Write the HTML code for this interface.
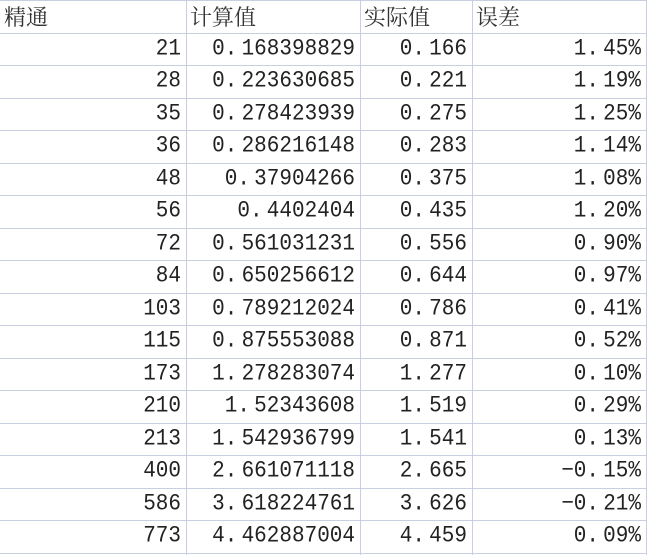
<!DOCTYPE html>
<html><head><meta charset="utf-8"><style>
body{margin:0;width:647px;height:555px;background:#fff;overflow:hidden;position:relative;font-family:"Liberation Mono","Noto Sans CJK SC",monospace;color:#222}
.h{position:absolute;left:0;width:647px;height:1px;background:#c9cfe0}
.v{position:absolute;top:0;width:1px;height:555px;background:#c9cfe0}
.c{position:absolute;height:32px;line-height:34px;font-size:21px;text-align:right;white-space:nowrap;transform:scaleY(1.08)}
.t{position:absolute;height:32px;line-height:34px;font-size:22px;font-family:"Noto Serif CJK SC",serif;color:#333}
</style></head><body>
<div id="g"></div>
<script>
var rows=[["21","0.168398829","0.166","1.45%"],["28","0.223630685","0.221","1.19%"],["35","0.278423939","0.275","1.25%"],["36","0.286216148","0.283","1.14%"],["48","0.37904266","0.375","1.08%"],["56","0.4402404","0.435","1.20%"],["72","0.561031231","0.556","0.90%"],["84","0.650256612","0.644","0.97%"],["103","0.789212024","0.786","0.41%"],["115","0.875553088","0.871","0.52%"],["173","1.278283074","1.277","0.10%"],["210","1.52343608","1.519","0.29%"],["213","1.542936799","1.541","0.13%"],["400","2.661071118","2.665","-0.15%"],["586","3.618224761","3.626","-0.21%"],["773","4.462887004","4.459","0.09%"]];
var rh=32.5,h="";
var xs=[0,186,360,472,646];
for(var i=0;i<=17;i++)h+='<div class="h" style="top:'+Math.round(i*rh)+'px"></div>';
for(var j=1;j<5;j++)h+='<div class="v" style="left:'+xs[j]+'px"></div>';
var hd=["精通","计算值","实际值","误差"];
for(var j=0;j<4;j++)h+='<div class="t" style="top:0;left:'+(xs[j]+4)+'px">'+hd[j]+'</div>';
rows.forEach(function(r,i){var y=Math.round((i+1)*rh);
for(var j=0;j<4;j++){var s=r[j].replace('.','. ').replace('-','−');
h+='<div class="c" style="top:'+y+'px;left:'+xs[j]+'px;width:'+(xs[j+1]-xs[j]-5)+'px">'+s.replace(/ /g,'&#8201;')+'</div>';}});
document.getElementById('g').innerHTML=h;
</script>
</body></html>
